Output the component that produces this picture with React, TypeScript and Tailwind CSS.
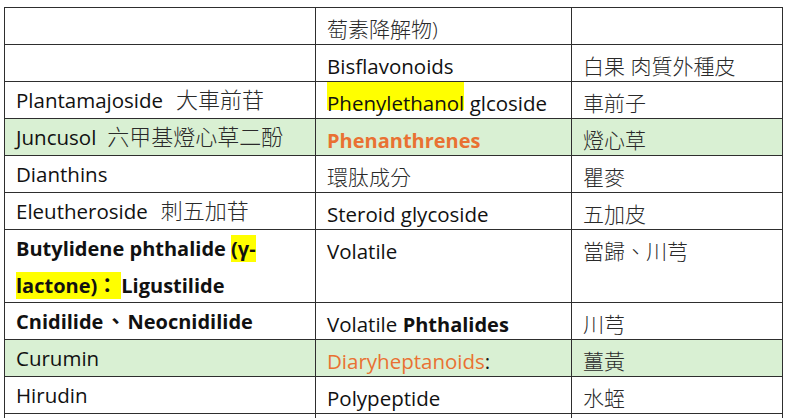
import React from "react";

const ROW = "grid grid-cols-[311px_256px_211px]";
const CELL = "border-r border-b border-[#2e2e2e] overflow-hidden pl-[11px] pr-[8px] leading-[36px] text-[20.5px] whitespace-nowrap";
const LEFT = CELL;
const MID = CELL + " pt-[3px]";
const CJK_L = "text-[22px] leading-[20px] font-light text-[#2a2a2a]";
const CJK = "text-[21px] leading-[20px] font-light text-[#2a2a2a]";
const HL = "bg-[#ffff00]";
const ORANGE = "text-[#e97132]";

function Row({
  h = "h-[37px]",
  green = false,
  a,
  b,
  c,
}: {
  h?: string;
  green?: boolean;
  a?: React.ReactNode;
  b?: React.ReactNode;
  c?: React.ReactNode;
}) {
  return (
    <div className={`${ROW} ${h} ${green ? "bg-[#d9f0d3]" : "bg-white"}`}>
      <div className={LEFT}>{a}</div>
      <div className={MID}>{b}</div>
      <div className={MID}>{c}</div>
    </div>
  );
}

export default function App() {
  return (
    <div className="w-[788px] h-[418px] overflow-hidden bg-white text-[#111] [font-family:'Open_Sans','Noto_Sans_CJK_TC',sans-serif]">
      <div className="ml-[4px] mt-[7px] w-[779px] border-l border-t border-[#2e2e2e]">
        <Row b={<span className={CJK}>萄素降解物)</span>} />
        <Row
          b="Bisflavonoids"
          c={<span className={CJK}>白果 肉質外種皮</span>}
        />
        <Row
          a={
            <>
              Plantamajoside<span className={`${CJK_L} ml-[13px]`}>大車前苷</span>
            </>
          }
          b={
            <>
              <span className="pt-[7px] bg-[linear-gradient(#ffff00,#ffff00)] bg-no-repeat bg-[length:100%_28px]">
                Phenylethanol
              </span>{" "}
              glcoside
            </>
          }
          c={<span className={CJK}>車前子</span>}
        />
        <Row
          green
          a={
            <>
              Juncusol<span className={`${CJK_L} ml-[11px]`}>六甲基燈心草二酚</span>
            </>
          }
          b={<span className={`${ORANGE} font-bold text-[20px]`}>Phenanthrenes</span>}
          c={<span className={CJK}>燈心草</span>}
        />
        <Row
          a="Dianthins"
          b={<span className={CJK}>環肽成分</span>}
          c={<span className={CJK}>瞿麥</span>}
        />
        <Row
          a={
            <>
              Eleutheroside<span className={`${CJK_L} ml-[13px]`}>刺五加苷</span>
            </>
          }
          b="Steroid glycoside"
          c={<span className={CJK}>五加皮</span>}
        />
        <Row
          h="h-[73px]"
          a={
            <span className="font-bold text-[20px]">
              Butylidene phthalide <span className={HL}>(γ-</span>
              <br />
              <span className={HL}>
                lactone)<span className="leading-[20px] pr-[4px]">：</span>
              </span>
              Ligustilide
            </span>
          }
          b="Volatile"
          c={<span className={CJK}>當歸、川芎</span>}
        />
        <Row
          a={
            <span className="font-bold text-[20px]">
              Cnidilide<span className="leading-[20px] ml-[2px] mr-[2px]">、</span>Neocnidilide
            </span>
          }
          b={
            <>
              Volatile <span className="font-bold text-[20px]">Phthalides</span>
            </>
          }
          c={<span className={CJK}>川芎</span>}
        />
        <Row
          green
          a="Curumin"
          b={
            <>
              <span className={ORANGE}>Diaryheptanoids</span>:
            </>
          }
          c={<span className={CJK}>薑黃</span>}
        />
        <Row
          a="Hirudin"
          b="Polypeptide"
          c={<span className={CJK}>水蛭</span>}
        />
        <Row />
      </div>
    </div>
  );
}
